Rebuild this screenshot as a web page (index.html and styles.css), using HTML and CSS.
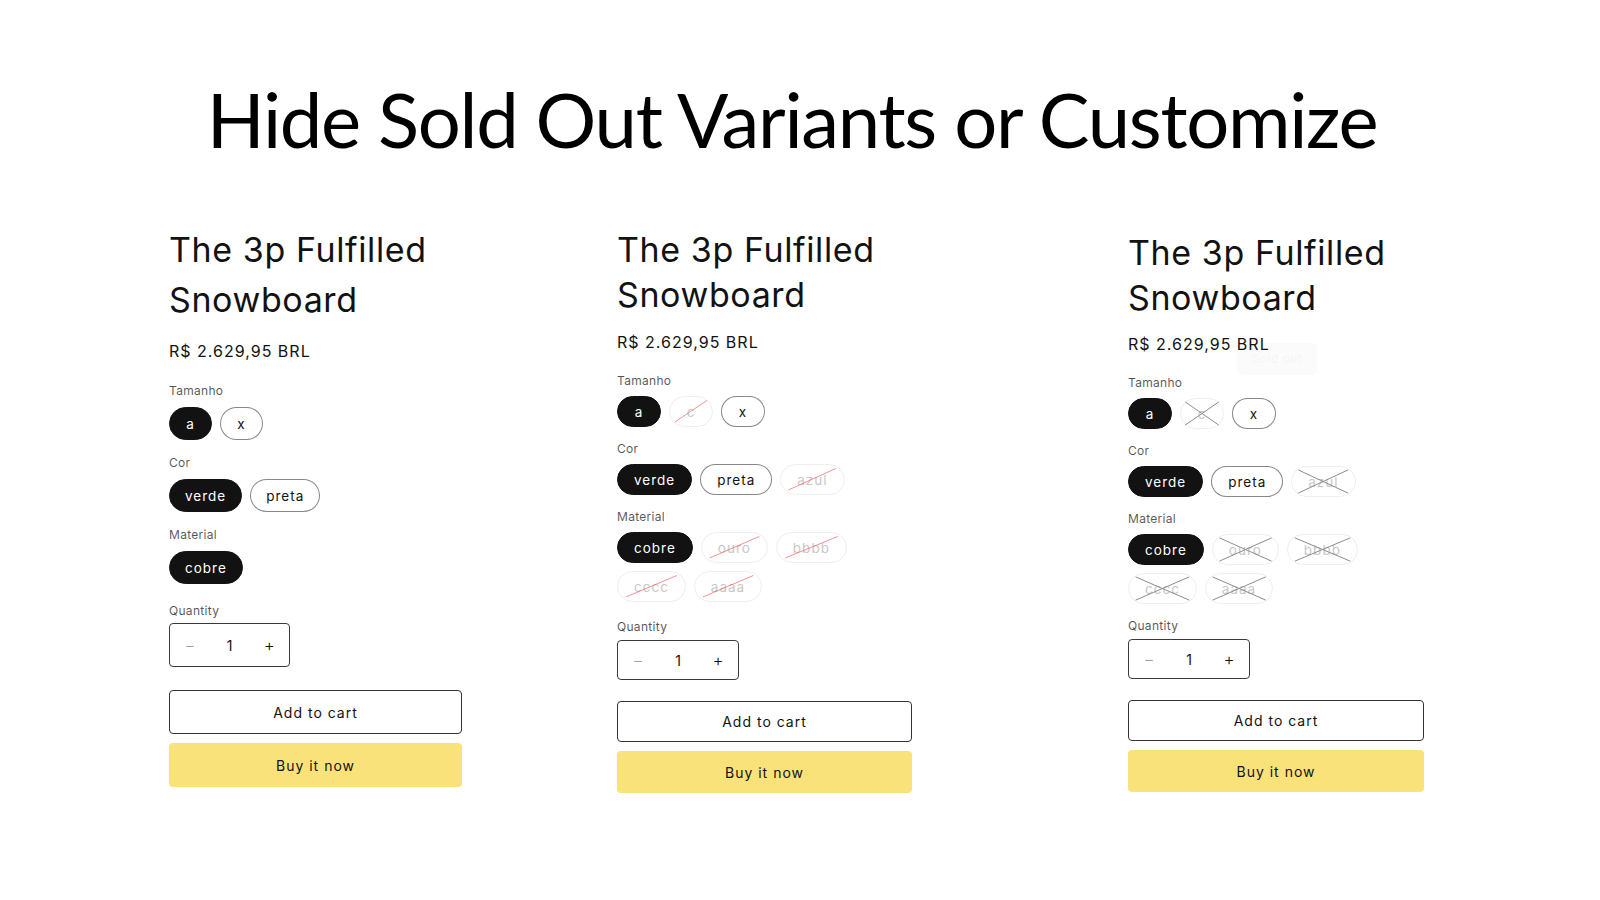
FILE: index.html
```html
<!DOCTYPE html>
<html lang="en">
<head>
<meta charset="utf-8">
<title>Hide Sold Out Variants or Customize</title>
<link rel="stylesheet" href="styles.css">
</head>
<body>
<main class="page">
  <h1 class="headline">Hide Sold Out Variants or Customize</h1>
  <div class="products">
    <!-- Column 1: sold-out variants hidden -->
    <section class="product product--one">
      <h2 class="product__title">The 3p Fulfilled Snowboard</h2>
      <p class="product__price"><span class="price__text">R$ 2.629,95 BRL</span></p>
      <div class="option">
        <p class="option__label">Tamanho</p>
        <div class="pills">
          <span class="pill pill--active">a</span>
          <span class="pill">x</span>
        </div>
      </div>
      <div class="option">
        <p class="option__label">Cor</p>
        <div class="pills">
          <span class="pill pill--active">verde</span>
          <span class="pill">preta</span>
        </div>
      </div>
      <div class="option">
        <p class="option__label">Material</p>
        <div class="pills">
          <span class="pill pill--active">cobre</span>
        </div>
      </div>
      <p class="option__label qty-label">Quantity</p>
      <div class="qty">
        <span class="qty__btn qty__btn--minus">−</span>
        <span class="qty__value">1</span>
        <span class="qty__btn">+</span>
      </div>
      <button class="btn btn--outline">Add to cart</button>
      <button class="btn btn--buy">Buy it now</button>
    </section>

    <!-- Column 2: sold-out variants struck through -->
    <section class="product product--two">
      <h2 class="product__title">The 3p Fulfilled Snowboard</h2>
      <p class="product__price"><span class="price__text">R$ 2.629,95 BRL</span></p>
      <div class="option">
        <p class="option__label">Tamanho</p>
        <div class="pills">
          <span class="pill pill--active">a</span>
          <span class="pill pill--sold">c<svg class="strike" viewBox="0 0 100 100" preserveAspectRatio="none"><line x1="12" y1="86" x2="88" y2="12"/></svg></span>
          <span class="pill">x</span>
        </div>
      </div>
      <div class="option">
        <p class="option__label">Cor</p>
        <div class="pills">
          <span class="pill pill--active">verde</span>
          <span class="pill">preta</span>
          <span class="pill pill--sold">azul<svg class="strike" viewBox="0 0 100 100" preserveAspectRatio="none"><line x1="12" y1="86" x2="88" y2="12"/></svg></span>
        </div>
      </div>
      <div class="option">
        <p class="option__label">Material</p>
        <div class="pills">
          <span class="pill pill--active">cobre</span>
          <span class="pill pill--sold">ouro<svg class="strike" viewBox="0 0 100 100" preserveAspectRatio="none"><line x1="12" y1="86" x2="88" y2="12"/></svg></span>
          <span class="pill pill--sold">bbbb<svg class="strike" viewBox="0 0 100 100" preserveAspectRatio="none"><line x1="12" y1="86" x2="88" y2="12"/></svg></span>
          <span class="pill pill--sold">cccc<svg class="strike" viewBox="0 0 100 100" preserveAspectRatio="none"><line x1="12" y1="86" x2="88" y2="12"/></svg></span>
          <span class="pill pill--sold">aaaa<svg class="strike" viewBox="0 0 100 100" preserveAspectRatio="none"><line x1="12" y1="86" x2="88" y2="12"/></svg></span>
        </div>
      </div>
      <p class="option__label qty-label">Quantity</p>
      <div class="qty">
        <span class="qty__btn qty__btn--minus">−</span>
        <span class="qty__value">1</span>
        <span class="qty__btn">+</span>
      </div>
      <button class="btn btn--outline">Add to cart</button>
      <button class="btn btn--buy">Buy it now</button>
    </section>

    <!-- Column 3: sold-out variants crossed -->
    <section class="product product--three">
      <h2 class="product__title">The 3p Fulfilled Snowboard</h2>
      <p class="product__price"><span class="ghost-badge">Sold out</span><span class="price__text">R$ 2.629,95 BRL</span></p>
      <div class="option">
        <p class="option__label">Tamanho</p>
        <div class="pills">
          <span class="pill pill--active">a</span>
          <span class="pill pill--sold pill--cross">c<svg class="strike" viewBox="0 0 100 100" preserveAspectRatio="none"><line x1="10" y1="10" x2="90" y2="90"/><line x1="10" y1="90" x2="90" y2="10"/></svg></span>
          <span class="pill">x</span>
        </div>
      </div>
      <div class="option">
        <p class="option__label">Cor</p>
        <div class="pills">
          <span class="pill pill--active">verde</span>
          <span class="pill">preta</span>
          <span class="pill pill--sold pill--cross">azul<svg class="strike" viewBox="0 0 100 100" preserveAspectRatio="none"><line x1="10" y1="10" x2="90" y2="90"/><line x1="10" y1="90" x2="90" y2="10"/></svg></span>
        </div>
      </div>
      <div class="option">
        <p class="option__label">Material</p>
        <div class="pills">
          <span class="pill pill--active">cobre</span>
          <span class="pill pill--sold pill--cross">ouro<svg class="strike" viewBox="0 0 100 100" preserveAspectRatio="none"><line x1="10" y1="10" x2="90" y2="90"/><line x1="10" y1="90" x2="90" y2="10"/></svg></span>
          <span class="pill pill--sold pill--cross">bbbb<svg class="strike" viewBox="0 0 100 100" preserveAspectRatio="none"><line x1="10" y1="10" x2="90" y2="90"/><line x1="10" y1="90" x2="90" y2="10"/></svg></span>
          <span class="pill pill--sold pill--cross">cccc<svg class="strike" viewBox="0 0 100 100" preserveAspectRatio="none"><line x1="10" y1="10" x2="90" y2="90"/><line x1="10" y1="90" x2="90" y2="10"/></svg></span>
          <span class="pill pill--sold pill--cross">aaaa<svg class="strike" viewBox="0 0 100 100" preserveAspectRatio="none"><line x1="10" y1="10" x2="90" y2="90"/><line x1="10" y1="90" x2="90" y2="10"/></svg></span>
        </div>
      </div>
      <p class="option__label qty-label">Quantity</p>
      <div class="qty">
        <span class="qty__btn qty__btn--minus">−</span>
        <span class="qty__value">1</span>
        <span class="qty__btn">+</span>
      </div>
      <button class="btn btn--outline">Add to cart</button>
      <button class="btn btn--buy">Buy it now</button>
    </section>
  </div>
</main>
</body>
</html>
```

FILE: styles.css
```css
* { box-sizing: border-box; }

html {
  background: #ffffff;
}

body {
  margin: 0;
  padding: 0;
  font-family: Inter, "Noto Sans", "Liberation Sans", sans-serif;
  color: #121212;
  width: 1600px;
  height: 900px;
  overflow: hidden;
}

.page {
  padding-top: 81px;
}

.headline {
  margin: 0;
  padding-right: 16px;
  font-family: Lato, "Noto Sans", sans-serif;
  font-weight: 400;
  font-size: 76px;
  line-height: 76px;
  text-align: center;
  color: #000;
  letter-spacing: -1.3px;
}

.products {
  display: flex;
  align-items: flex-start;
  margin-top: 68px;
  padding-left: 169px;
}

.product {
  display: flex;
  flex-direction: column;
  align-items: flex-start;
}

.product p { margin: 0; }

.product__title {
  margin: 0;
  font-weight: 400;
  font-size: 34px;
  letter-spacing: 0.6px;
  color: #121212;
  width: 100%;
}

.product__price {
  position: relative;
  font-size: 16px;
  line-height: 20px;
  letter-spacing: 1px;
  color: #121212;
}

.price__text {
  position: relative;
  z-index: 1;
}

.option__label {
  font-size: 12px;
  line-height: 16px;
  letter-spacing: 0.3px;
  color: rgba(18, 18, 18, 0.72);
}

.option {
  display: flex;
  flex-direction: column;
  align-items: flex-start;
}

.pills {
  display: flex;
  flex-wrap: wrap;
  gap: 8px;
}

.pill {
  position: relative;
  display: inline-flex;
  align-items: center;
  justify-content: center;
  min-width: 44px;
  padding: 0 16px;
  border: 1px solid rgba(18, 18, 18, 0.5);
  border-radius: 40px;
  font-size: 13.5px;
  letter-spacing: 1px;
  color: #121212;
  background: #fff;
}

.pill--active {
  background: #121212;
  border-color: #121212;
  color: #fff;
}

.pill--sold {
  border-color: #eeeeee;
  color: #c8c8c8;
}

.strike {
  position: absolute;
  inset: 0;
  width: 100%;
  height: 100%;
  overflow: visible;
}

.strike line {
  stroke: rgba(236, 110, 110, 0.75);
  stroke-width: 1;
  vector-effect: non-scaling-stroke;
}

.pill--cross .strike line {
  stroke: #8c8c8c;
}

.ghost-badge {
  position: absolute;
  left: 109px;
  top: 9px;
  width: 80px;
  height: 32px;
  display: flex;
  align-items: center;
  justify-content: center;
  background: #fbfbfb;
  border-radius: 5px;
  color: #f5f5f5;
  font-size: 12px;
  letter-spacing: 0.5px;
}

.qty {
  display: flex;
  align-items: center;
  border: 1px solid #3a3a3a;
  border-radius: 4px;
}

.qty__btn,
.qty__value {
  width: 40px;
  text-align: center;
  font-size: 14px;
  color: #121212;
}

.qty__btn {
  font-size: 17px;
  font-weight: 300;
}

.qty__btn--minus {
  color: #a0a0a0;
}

.btn {
  display: flex;
  align-items: center;
  justify-content: center;
  width: 100%;
  margin: 0;
  padding: 0;
  font-family: Inter, "Noto Sans", sans-serif;
  font-size: 14px;
  letter-spacing: 1px;
  color: #121212;
  border-radius: 4px;
}

.btn--outline {
  background: #fff;
  border: 1px solid #333;
}

.btn--buy {
  background: #fae27a;
  border: none;
}

/* ---------- Column 1 ---------- */
.product--one {
  width: 293px;
}
.product--one .product__title { line-height: 50px; }
.product--one .product__price { margin-top: 16px; }
.product--one .option:first-of-type .option__label { margin-top: 22px; }
.product--one .option + .option .option__label { margin-top: 15px; }
.product--one .pills { margin-top: 8px; }
.product--one .pill { height: 33px; padding: 0 15px; min-width: 43px; }
.product--one .qty-label { margin-top: 19px; }
.product--one .qty { margin-top: 4px; width: 121px; height: 44px; }
.product--one .btn--outline { margin-top: 23px; height: 44px; }
.product--one .btn--buy { margin-top: 9px; height: 44px; }

/* ---------- Column 2 ---------- */
.product--two {
  width: 295px;
  margin-left: 155px;
  margin-top: 2px;
}
.product--two .product__title,
.product--three .product__title { line-height: 45px; }
.product--two .product__price,
.product--three .product__price { margin-top: 15px; }
.product--two .option:first-of-type .option__label,
.product--three .option:first-of-type .option__label { margin-top: 21px; }
.product--two .option + .option .option__label,
.product--three .option + .option .option__label { margin-top: 14px; }
.product--two .pills,
.product--three .pills { margin-top: 7px; }
.product--two .pill,
.product--three .pill { height: 31px; }
.product--two .qty-label,
.product--three .qty-label { margin-top: 17px; }
.product--two .qty,
.product--three .qty { margin-top: 5px; width: 122px; height: 40px; }
.product--two .btn--outline,
.product--three .btn--outline { margin-top: 21px; height: 41px; }
.product--two .btn--buy,
.product--three .btn--buy { margin-top: 9px; height: 42px; }

/* ---------- Column 3 ---------- */
.product--three {
  width: 296px;
  margin-left: 216px;
  margin-top: 5px;
}
.product--three .product__price { margin-top: 14px; }
.product--three .qty-label { margin-top: 14px; }
```
